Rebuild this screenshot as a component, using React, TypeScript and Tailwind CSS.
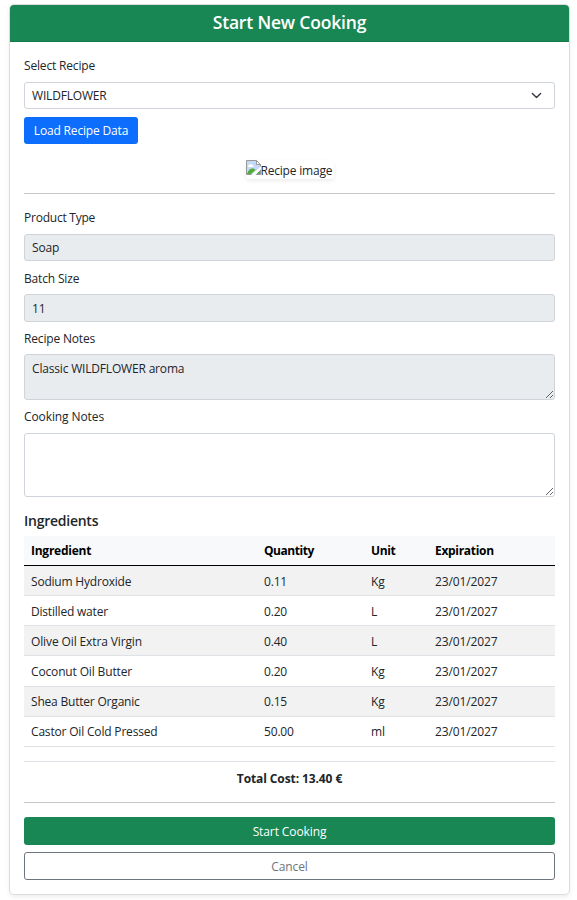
import React from 'react';

const ingredients = [
  { name: 'Sodium Hydroxide', track: 'tracking-[-0.2px]', quantity: '0.11', unit: 'Kg', row: 'h-[30px]', pad: 'pt-[7px]' },
  { name: 'Distilled water', track: 'tracking-[-0.2px]', quantity: '0.20', unit: 'L', row: 'h-[30px]', pad: 'pt-[7px]' },
  { name: 'Olive Oil Extra Virgin', track: 'tracking-[-0.12px]', quantity: '0.40', unit: 'L', row: 'h-[30px]', pad: 'pt-[7px]' },
  { name: 'Coconut Oil Butter', track: 'tracking-[-0.15px]', quantity: '0.20', unit: 'Kg', row: 'h-[31px]', pad: 'pt-[7px]' },
  { name: 'Shea Butter Organic', track: 'tracking-[-0.2px]', quantity: '0.15', unit: 'Kg', row: 'h-[30px]', pad: 'pt-[6px]' },
  { name: 'Castor Oil Cold Pressed', track: 'tracking-[-0.18px]', quantity: '50.00', unit: 'ml', row: 'h-[30px]', pad: 'pt-[6px]' },
];

const field =
  'block w-full rounded-[3px] border border-[#ced4da] px-[7px] tracking-[-0.18px] text-[#212529] outline-none';

const headCell = 'border-b border-black p-0 pl-[7px] pt-[6px] align-top font-bold';
const bodyCell = 'border-b border-[#dee2e6] p-0 pl-[7px] align-top';

function BrokenImage() {
  return (
    <svg width="16" height="16" viewBox="0 0 16 16" className="shrink-0">
      <path d="M.5.5h10l4 4v10H.5z" fill="#c3d9f7" />
      <path d="M2 6.500c0-1 .6-1.500 1.300-1.500.5-1.500 2.500-1.500 3 0 1.200 0 1.700 1.500.7 2H2.500z" fill="#fff" />
      <path d="M1 14c1-3.500 3-5.500 5.500-5.500 1.500 0 2.500.7 3 1.500l-4.500 4z" fill="#54ac38" />
      <path d="M10 14l4.500-4V14z" fill="#54ac38" />
      <path d="M.5 14.500V.5h10l4 4v10z" fill="none" stroke="#999" />
      <path d="M10.500.5v4h4z" fill="#fff" stroke="#999" />
      <path d="M4.500 15.500L15.200 6v3L9 15.500z" fill="#fff" />
    </svg>
  );
}

export default function App() {
  return (
    <div className="h-[900px] w-[577px] overflow-hidden bg-white pl-[9px] pt-1 font-['Open_Sans','Noto_Sans',sans-serif] text-[12px] leading-[18px] tracking-[-0.17px] text-[#212529]">
      <div className="h-[891px] w-[561px] rounded-[5px] border border-[#dcdddf] bg-white shadow-[0_2px_4px_rgba(0,0,0,0.075)]">
        <header className="h-[37px] rounded-t-[4px] border-b border-[#177a4c] bg-[#198754] text-center text-[17.5px] font-semibold leading-[35px] text-white">
          <h1>Start New Cooking</h1>
        </header>
        <form className="flex flex-col px-[14px] pt-[15px]" onSubmit={(e) => e.preventDefault()}>
          <label className="h-[25px]">Select Recipe</label>
          <div className="relative">
            <select className={`${field} h-[27px] appearance-none bg-white`}>
              <option>WILDFLOWER</option>
            </select>
            <svg className="absolute right-[13px] top-[8px]" width="11" height="11" viewBox="0 0 16 16" fill="none" stroke="#343a40" strokeWidth="2" strokeLinecap="round" strokeLinejoin="round">
              <path d="m2 5 6 6 6-6" />
            </svg>
          </div>
          <button type="button" className="mt-2 h-[27px] w-[114px] rounded-[3px] bg-[#0d6efd] pt-px text-white">Load Recipe Data</button>
          <div className="mx-auto mt-4 flex h-[19px] w-[88px] whitespace-nowrap rounded-[4px] shadow-[0_2px_4px_rgba(0,0,0,0.075)]">
            <BrokenImage />
            <span className="-ml-px leading-[21px] tracking-[-0.2px]">Recipe image</span>
          </div>
          <hr className="mt-[14px] border-[#c7c8c9]" />
          <label className="mt-[15px] h-[25px] tracking-[-0.23px]">Product Type</label>
          <input readOnly value="Soap" className={`${field} h-[27px] bg-[#e9ecef]`} />
          <label className="mt-[9px] h-6">Batch Size</label>
          <input readOnly value="11" className={`${field} h-7 bg-[#e9ecef]`} />
          <label className="mt-2 h-6">Recipe Notes</label>
          <textarea readOnly value="Classic WILDFLOWER aroma" className={`${field} h-[46px] resize-y bg-[#e9ecef] pt-[5px]`} />
          <label className="mt-2 h-[25px] tracking-[-0.1px]">Cooking Notes</label>
          <textarea className={`${field} h-16 resize-y bg-white`} />
          <h2 className="mt-[15px] h-6 text-[14px] font-semibold tracking-[-0.25px]">Ingredients</h2>
          <table className="w-full table-fixed border-separate border-spacing-0 text-left">
            <colgroup>
              <col className="w-[233px]" />
              <col className="w-[107px]" />
              <col className="w-[64px]" />
              <col />
            </colgroup>
            <thead>
              <tr className="h-[30px] bg-[#f8f9fa] text-black">
                <th className={`${headCell} tracking-[-0.25px]`}>Ingredient</th>
                <th className={`${headCell} tracking-[-0.45px]`}>Quantity</th>
                <th className={`${headCell} tracking-[-0.4px]`}>Unit</th>
                <th className={`${headCell} tracking-[-0.3px]`}>Expiration</th>
              </tr>
            </thead>
            <tbody>
              {ingredients.map((item) => (
                <tr key={item.name} className={`${item.row} odd:bg-[#f2f2f2]`}>
                  <td className={`${bodyCell} ${item.pad} ${item.track}`}>{item.name}</td>
                  <td className={`${bodyCell} ${item.pad}`}>{item.quantity}</td>
                  <td className={`${bodyCell} ${item.pad} tracking-[-0.1px]`}>{item.unit}</td>
                  <td className={`${bodyCell} ${item.pad} tracking-[-0.13px]`}>23/01/2027</td>
                </tr>
              ))}
            </tbody>
          </table>
          <div className="mt-[14px] h-[41px] border-t border-[#dee2e6] pt-2 text-center font-bold tracking-[-0.1px]">Total Cost: 13.40 €</div>
          <hr className="border-[#c7c8c9]" />
          <button type="submit" className="mt-[14px] h-7 rounded-[3px] bg-[#198754] pt-px tracking-[-0.1px] text-white">Start Cooking</button>
          <button type="button" className="mt-[7px] h-7 rounded-[3px] border border-[#6c757d] pt-px tracking-[-0.1px] text-[#6c757d]">Cancel</button>
        </form>
      </div>
    </div>
  );
}
